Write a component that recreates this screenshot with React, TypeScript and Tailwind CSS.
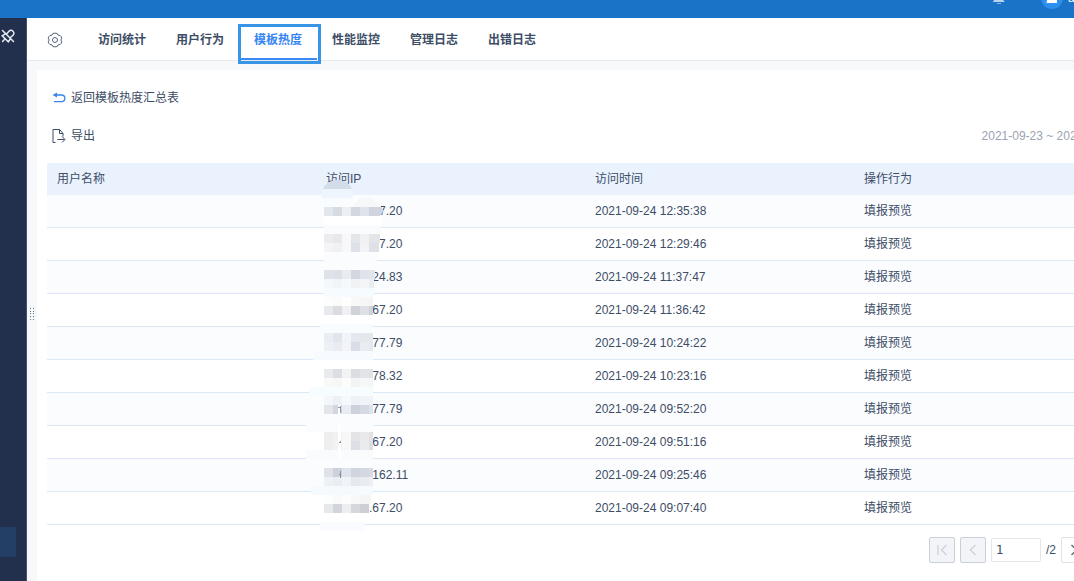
import React from "react";

const tabs = ["访问统计", "用户行为", "模板热度", "性能监控", "管理日志", "出错日志"];
const activeTab = "模板热度";

const visits = [
  { ip: ".67.20", time: "2021-09-24 12:35:38" },
  { ip: ".67.20", time: "2021-09-24 12:29:46" },
  { ip: ".24.83", time: "2021-09-24 11:37:47" },
  { ip: ".67.20", time: "2021-09-24 11:36:42" },
  { ip: ".77.79", time: "2021-09-24 10:24:22" },
  { ip: ".78.32", time: "2021-09-24 10:23:16" },
  { ip: ".77.79", time: "2021-09-24 09:52:20" },
  { ip: ".67.20", time: "2021-09-24 09:51:16" },
  { ip: ".162.11", time: "2021-09-24 09:25:46" },
  { ip: ".67.20", time: "2021-09-24 09:07:40" },
];

// One strip of mosaic: top edge, right edge, then one colour per 9px block.
type Strip = { y: number; end: number; colors: string[] };

const strips: Strip[] = [
  { y: 35, end: 52, colors: ["#f8fcff", "#f9fcff", "#fafcfe", "#fafcfe"] },
  { y: 44, end: 78, colors: ["#e3e6ec", "#d7dce3", "#eceff4", "#d2d7e0", "#dfe3ea", "#cfd4df"] },
  { y: 53, end: 82, colors: ["#ffffff", "#ffffff", "#ffffff", "#ffffff", "#ffffff", "#ffffff"] },
  { y: 62, end: 81, colors: ["#fafbfd", "#fafbfd", "#fafbfd", "#fafbfd", "#fafbfd", "#fafbfd"] },
  { y: 71, end: 80, colors: ["#ececef", "#e7e8eb", "#f8f8fa", "#e5e6e9", "#f1f1f3", "#e4e5e8"] },
  { y: 80, end: 79, colors: ["#f4f4f6", "#f0f1f3", "#f8f8fa", "#dee1e8", "#f3f3f5", "#dfe1e8"] },
  { y: 89, end: 77, colors: ["#fbfcfd", "#fbfcfd", "#fbfcfd", "#fbfcfd", "#fbfcfd", "#fbfcfd"] },
  { y: 107, end: 75, colors: ["#dfe3e9", "#dde1e7", "#e9edf2", "#d2d7e0", "#e0e4ea", "#e2e5eb"] },
  { y: 116, end: 74, colors: ["#f4f8fa", "#f1f5f8", "#f6f9fb", "#f0f3f6", "#f3f5f7", "#e9ecf0"] },
  { y: 125, end: 74, colors: ["#f6fbff", "#f6fbff", "#f6fbff", "#f6fbff", "#f6fbff", "#f6fbff"] },
  { y: 134, end: 73, colors: ["#fdfdfb", "#fbfcfa", "#fefefe", "#f9f8f8", "#f8f7f7", "#f5f4f5"] },
  { y: 143, end: 73, colors: ["#e8e9ed", "#dadce1", "#f0f0f2", "#d0d2d9", "#dfe0e5", "#cfd2d6"] },
  { y: 170, end: 73, colors: ["#eaedf3", "#e2e5ec", "#f1f4f8", "#e5e8ee", "#e4e7ec", "#e4e7ec"] },
  { y: 179, end: 73, colors: ["#edf0f5", "#e8ebf1", "#f2f4f8", "#dadde7", "#e9ecf2", "#e5e8ee"] },
  { y: 206, end: 73, colors: ["#e9eaed", "#dddee3", "#f2f3f4", "#dcdde2", "#e3e4e8", "#e0e2e3"] },
  { y: 215, end: 73, colors: ["#f9f9f8", "#f7f7f7", "#fcfcfc", "#f2f3f3", "#f7f7f7", "#f5f6f6"] },
  { y: 233, end: 73, colors: ["#f3f6fa", "#edf1f5", "#f5f9fc", "#eef1f5", "#f0f3f7", "#f0f3f7"] },
  { y: 242, end: 73, colors: ["#e2e5ea", "#d3d7dd", "#e9ecf2", "#ccd1dc", "#d5d9e1", "#e0e4ea"] },
  { y: 269, end: 73, colors: ["#eeeeef", "#f1f1f2", "#f7f7f8", "#e4e4e7", "#e9e9eb", "#e2e2e5"] },
  { y: 278, end: 73, colors: ["#efeff1", "#f3f3f3", "#f8f8f9", "#dcdfe5", "#eaebee", "#dcdee1"] },
  { y: 305, end: 73, colors: ["#dfe2e9", "#cdd1da", "#dfe4ec", "#cfd4de", "#d3d8e1", "#d7dbe3"] },
  { y: 314, end: 73, colors: ["#edf1f5", "#eaeef3", "#f0f4f8", "#e5e9ef", "#e8ecf1", "#eceff3"] },
  { y: 332, end: 71, colors: ["#fcfdfd", "#fafafb", "#fdfdfd", "#f8f8f9", "#f5f5f6", "#f6f6f7"] },
  { y: 341, end: 69, colors: ["#e6e8ec", "#d2d5da", "#eceef0", "#d4d7dc", "#cdcfd5"] },
];

const veils = [
  { x: 20, y: 161, w: 53, fill: "#f7fcff" },
  { x: 13, y: 188, w: 60, fill: "#f7fbff" },
  { x: 9, y: 224, w: 64, fill: "#f7fcff" },
  { x: 6, y: 260, w: 67, fill: "#fafcfe" },
  { x: 6, y: 287, w: 67, fill: "#fafbfd" },
  { x: 11, y: 323, w: 62, fill: "#f5faff" },
  { x: 20, y: 359, w: 44, fill: "#f9fbfe" },
];

function IpMosaic() {
  return (
    <svg
      aria-hidden="true"
      className="pointer-events-none absolute top-0 left-1/4 -ml-4"
      width="120"
      height="370"
      viewBox="0 0 120 370"
      shapeRendering="crispEdges"
    >
      <path d="M23 26 C25 20 31 17 38 17 C45 17 50 20 52 26 Z" fill="#d3dde9" />
      <rect x="22" y="26" width="31" height="9" fill="#eef5fe" />
      <path d="M53 44 Q56 35 66 35 Q78 36 81 44 Z" fill="#f5f7f9" />
      <path d="M77 44 H82 Q84 49 80 53 H77 Z" fill="#cfd4df" />
      {veils.map((v) => (
        <rect key={v.y} x={v.x} y={v.y} width={v.w} height="9" fill={v.fill} />
      ))}
      {strips.map((s) =>
        s.colors.map((c, i) => {
          const x = 24 + i * 9;
          const w = i === s.colors.length - 1 ? s.end - x : 9;
          return <rect key={`${s.y}-${i}`} x={x} y={s.y} width={w} height="9" fill={c} />;
        }),
      )}
      <path d="M38 242 H41 V251 H38 Z M38 260 H41 V296 H38 Z" fill="#ffffff" />
      <path d="M38 244.500 H40 M40.500 243 V250 M39 279.500 H41 M40.500 278 V280 M39 311.500 H41 M40.500 308 V315" stroke="#8b96a7" fill="none" />
    </svg>
  );
}

function Gear() {
  return (
    <svg width="16" height="16" viewBox="0 0 16 16" fill="none" stroke="#56657d" aria-hidden="true">
      <path
        d="M5.800 1.500q2.200-.7 4.400 0l.9 1.700 2 .3q1.500 1.200 1.700 2.600L13.800 8l1 1.900q-.2 1.400-1.700 2.600l-2 .3-.9 1.700q-2.200.7-4.400 0l-.9-1.700-2-.3Q1.400 11.300 1.200 9.900L2.200 8l-1-1.900q.2-1.400 1.700-2.600l2-.3z"
        strokeLinejoin="round"
      />
      <circle cx="8" cy="8" r="2.500" />
    </svg>
  );
}

function Unpin() {
  return (
    <svg width="14" height="14" viewBox="0 0 14 14" fill="none" stroke="#e6ebf3" strokeWidth="1.500" strokeLinecap="round" aria-hidden="true">
      <path d="M1.500 1.500 12.500 12.500M6 4.500 8 2.200a2.700 2.700 0 0 1 4 0 2.700 2.700 0 0 1 0 4L9.700 8.200M4.200 4.800 1.200 6.800 7.300 12.800 9.500 9.800M4.200 9.800 1.500 12.500" />
    </svg>
  );
}

const pagerButton = "flex size-[26px] items-center justify-center rounded-xs border";

export default function App() {
  return (
    <div className="flex h-screen min-h-[581px] flex-col overflow-hidden bg-[#f6f8fa] font-['Liberation_Sans','Noto_Sans_CJK_SC',sans-serif] text-xs text-[#3d4d66]">
      <header className="flex h-[18px] shrink-0 justify-end overflow-hidden bg-[#1a73c7]">
        <svg width="75" height="18" viewBox="0 0 75 18" aria-hidden="true">
          <path d="M1 0H10L12 2H0Z" fill="#b9d4ef" />
          <path d="M4 3.500H8" stroke="#8ab8e4" />
          <circle cx="59" cy="-2" r="11" fill="#2d8ff0" />
          <path d="M54 0H64V3H53.500Z" fill="#ffffff" />
        </svg>
        <span className="-mt-2 w-1.5 overflow-hidden leading-3 whitespace-nowrap text-white">admin</span>
      </header>

      <div className="flex min-h-0 flex-1">
        <aside className="flex w-[27px] shrink-0 flex-col justify-between border-r border-[#435270] bg-[#22304d]">
          <button type="button" aria-label="取消固定" className="mt-[11px] ml-px">
            <Unpin />
          </button>
          <div className="mb-6 h-[30px] w-4 bg-[#243f66]" />
        </aside>

        <main className="flex min-w-0 flex-1 flex-col overflow-hidden">
          <nav className="flex h-[43px] shrink-0 border-b border-[#e6e9ee] bg-white pl-5">
            <button type="button" aria-label="设置" className="mr-5 flex items-center pt-0.5">
              <Gear />
            </button>
            {tabs.map((tab) => (
              <a
                key={tab}
                href="#"
                aria-current={tab === activeTab ? "page" : undefined}
                className={
                  tab === activeTab
                    ? "relative flex w-[78px] items-center justify-center border-b-2 border-[#3a8bf5] pt-1 font-bold text-[#3685f2]"
                    : "flex w-[78px] items-center justify-center border-b-2 border-transparent pt-1 font-bold"
                }
              >
                {tab}
                {tab === activeTab && (
                  <span className="absolute top-1.5 -right-1 -bottom-1.5 -left-px border-3 border-[#3895e6]" />
                )}
              </a>
            ))}
          </nav>

          <div className="flex min-h-0 flex-1">
            <div className="flex w-2.5 shrink-0 items-center justify-center pb-3.5">
              <svg width="6" height="14" viewBox="0 0 6 14" fill="#68768f" shapeRendering="crispEdges" aria-hidden="true">
                <path d="M1 1h1v1H1zM4 1h1v1H4zM1 4h1v1H1zM4 4h1v1H4zM1 6h1v1H1zM4 6h1v1H4zM1 9h1v1H1zM4 9h1v1H4zM1 12h1v1H1zM4 12h1v1H4z" />
              </svg>
            </div>

            <section className="mt-[9px] min-w-[1096px] flex-1 bg-white px-2.5 pt-4">
              <a href="#" className="flex h-6 items-center gap-[5px] pl-[5px]">
                <svg width="14" height="14" viewBox="0 0 14 14" fill="none" stroke="#3685f2" strokeWidth="1.300" aria-hidden="true">
                  <path d="M3 4h6.500a3.200 3.200 0 0 1 0 6.700H2" />
                  <path d="M.5 4 5 1.500v5z" fill="#3685f2" stroke="none" />
                </svg>
                返回模板热度汇总表
              </a>

              <div className="mt-3.5 flex h-6 items-center justify-between">
                <button type="button" className="flex items-center gap-[5px] pl-[3px]">
                  <svg width="16" height="16" viewBox="0 0 16 16" fill="none" stroke="#3d4d66" aria-hidden="true">
                    <path d="M5.500 14.500H3v-13h6.500l3.500 4v3M9.500 1.500v4H13M7.500 11.500h7M12 8.500l3 3-3 3" />
                  </svg>
                  导出
                </button>
                <span className="pr-[5px] text-[#9aa3b2]">2021-09-23 ~ 2021-09-24</span>
              </div>

              <div className="relative mt-[15px]">
                <table className="w-full table-fixed border-separate border-spacing-0 text-left">
                  <thead>
                    <tr className="h-8 bg-[#eaf2fe]">
                      <th className="px-2.5 py-0 font-normal">用户名称</th>
                      <th className="px-2.5 py-0 font-normal">访问IP</th>
                      <th className="px-2.5 py-0 font-normal">访问时间</th>
                      <th className="px-2.5 py-0 font-normal">操作行为</th>
                    </tr>
                  </thead>
                  <tbody>
                    {visits.map((v) => (
                      <tr key={v.time} className="h-[33px] odd:bg-[#fbfcfe]">
                        <td className="border-b border-[#dbe8f8]" />
                        <td className="border-b border-[#dbe8f8] pl-[53px]">{v.ip}</td>
                        <td className="border-b border-[#dbe8f8] px-2.5">{v.time}</td>
                        <td className="border-b border-[#dbe8f8] px-2.5">填报预览</td>
                      </tr>
                    ))}
                  </tbody>
                </table>
                <IpMosaic />
              </div>

              <div className="mt-3 flex items-center justify-end gap-[5px] pr-[5px]">
                <button type="button" disabled aria-label="首页" className={`${pagerButton} border-[#c9ced8] bg-[#f2f4f8]`}>
                  <svg width="12" height="12" viewBox="0 0 12 12" fill="none" stroke="#ccd1da" strokeWidth="1.300">
                    <path d="M2 1v10M10.500 1 5.500 6l5 5" />
                  </svg>
                </button>
                <button type="button" disabled aria-label="上一页" className={`${pagerButton} border-[#c9ced8] bg-[#f2f4f8]`}>
                  <svg width="12" height="12" viewBox="0 0 12 12" fill="none" stroke="#ccd1da" strokeWidth="1.300">
                    <path d="M8.500 1 3.500 6l5 5" />
                  </svg>
                </button>
                <input
                  aria-label="页码"
                  defaultValue="1"
                  className="h-6 w-[50px] rounded-xs border border-[#e3e6eb] px-1 font-['DejaVu_Sans',sans-serif] text-xs"
                />
                <span className="w-[10px]">/2</span>
                <button type="button" aria-label="下一页" className={`${pagerButton} border-[#dfe3e9] bg-white`}>
                  <svg width="12" height="12" viewBox="0 0 12 12" fill="none" stroke="#5a6880" strokeWidth="1.300">
                    <path d="M3.500 1l5 5-5 5" />
                  </svg>
                </button>
                <button type="button" aria-label="末页" className={`${pagerButton} border-[#dfe3e9] bg-white`}>
                  <svg width="12" height="12" viewBox="0 0 12 12" fill="none" stroke="#5a6880" strokeWidth="1.300">
                    <path d="M1.500 1l5 5-5 5M10 1v10" />
                  </svg>
                </button>
              </div>
            </section>
          </div>
        </main>
      </div>
    </div>
  );
}
